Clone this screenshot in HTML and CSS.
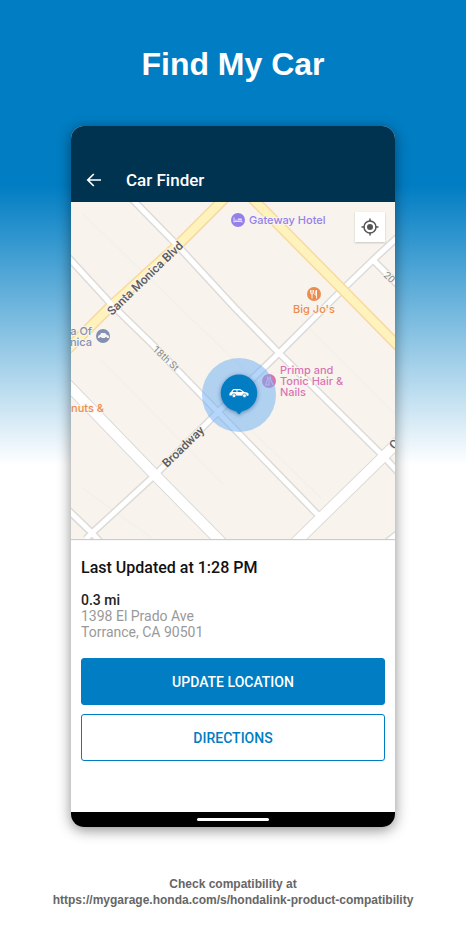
FILE: index.html
```html
<!DOCTYPE html>
<html lang="en">
<head>
    <meta charset="UTF-8">
    <meta name="viewport" content="width=device-width, initial-scale=1.0">
    <title>Find My Car</title>
    <link rel="stylesheet" href="styles.css">
</head>
<body>
    <h1>Find My Car</h1>

    <main class="phone">
        <header class="app-bar">
            <button class="back-btn" type="button" aria-label="Back">
                <svg width="16" height="16" viewBox="0 0 16 16" fill="none" stroke="currentColor" stroke-width="1.700">
                    <path d="M15 8H2M7.800 2L1.800 8l6 6"/>
                </svg>
            </button>
            <h2>Car Finder</h2>
        </header>

        <div class="map">
            <svg class="map-canvas" viewBox="0 0 324 337" role="img" aria-label="Map of the parked car">
                <rect width="324" height="337" fill="#f8f4ed"/>

                <!-- alleys -->
                <g class="alley">
                    <path d="M12 12L190 184M30 158L152 282M230 118L324 212M176 224L250 296M10 285L82 337"/>
                </g>

                <!-- road casings -->
                <g class="casing">
                    <path class="minor" d="M60 -4L106 43L164 106L208 151L312 254L330 273"/>
                    <path class="minor" d="M-4 54L41 103L82 143L147 210L249 315"/>
                    <path class="minor" d="M-4 307L21 331L30 341"/>
                    <path class="minor" d="M15 337L21 331L84 273L147 210L208 151L269 90L302 58L328 34"/>
                    <path class="minor" d="M302 58L330 86"/>
                    <path class="minor" d="M310 345L330 329"/>
                    <path class="major" d="M-5 181L84 273L152 342"/>
                    <path class="major" d="M222 343L311 256L330 237"/>
                </g>
                <!-- road surfaces -->
                <g class="surface">
                    <path class="minor" d="M60 -4L106 43L164 106L208 151L312 254L330 273"/>
                    <path class="minor" d="M-4 54L41 103L82 143L147 210L249 315"/>
                    <path class="minor" d="M-4 307L21 331L30 341"/>
                    <path class="minor" d="M15 337L21 331L84 273L147 210L208 151L269 90L302 58L328 34"/>
                    <path class="minor" d="M302 58L330 86"/>
                    <path class="minor" d="M310 345L330 329"/>
                    <path class="major" d="M-5 181L84 273L152 342"/>
                    <path class="major" d="M222 343L311 256L330 237"/>
                </g>
                <!-- boulevards -->
                <g class="blvd-casing">
                    <path d="M-5 149L41 103L107 43L156 -6"/>
                    <path d="M179 -6L272 88L330 147"/>
                </g>
                <g class="blvd">
                    <path d="M-5 149L41 103L107 43L156 -6"/>
                    <path d="M179 -6L272 88L330 147"/>
                </g>
                <path d="M36 98L46 108M101 38L111 48" stroke="#fff" stroke-width="5"/>

                <text class="street street-main" transform="translate(41 114) rotate(-44)">Santa Monica Blvd</text>
                <text class="street street-main" transform="translate(96 266) rotate(-44)">Broadway</text>
                <text class="street" transform="translate(81 148) rotate(43)">18th St</text>
                <text class="street" transform="translate(312 74) rotate(43)">20</text>
                <text class="street street-main" transform="translate(323 248) rotate(-44)">C</text>

                <!-- hotel -->
                <g class="poi hotel">
                    <circle cx="167" cy="18" r="7"/>
                    <path d="M163 15.500v5M163 19.500h8v1" fill="none" stroke="#e4dcf4"/>
                    <path d="M164 18.500h7v-.8q0-1.200-1.200-1.200H167v1.300h-3z" fill="#e4dcf4"/>
                    <text x="178" y="22">Gateway Hotel</text>
                </g>

                <!-- restaurant -->
                <g class="poi food">
                    <circle cx="243" cy="92" r="7"/>
                    <path d="M239.500 88v2.500q0 1.500 1.500 1.500t1.500-1.500V88M241 88v8.500M245.500 96.500V88q-1.500 1.500-1.500 5h1.500" fill="none" stroke="#f8f4ed"/>
                    <text x="243" y="111" text-anchor="middle">Big Jo's</text>
                    <text x="33" y="210" text-anchor="end">nuts &amp;</text>
                </g>

                <!-- dealer -->
                <g class="poi dealer">
                    <circle cx="32" cy="134" r="7"/>
                    <path d="M27 135q0-2 2-2l1-2h4l2 2q2 0 2 2v1H27z" fill="#f8f4ed"/>
                    <circle cx="29.500" cy="136" r="1"/>
                    <circle cx="35" cy="136" r="1"/>
                    <text x="21" y="133" text-anchor="end">a Of</text>
                    <text x="21" y="144" text-anchor="end">nica</text>
                </g>

                <!-- salon -->
                <g class="poi salon">
                    <circle cx="198" cy="179" r="7"/>
                    <path d="M196.500 174.500v3l-2 5.500h3.500v-8M199.500 174.500v3l2.500 5.500" fill="none" stroke="#f3c9e4"/>
                    <text x="209" y="172">Primp and</text>
                    <text x="209" y="183">Tonic Hair &amp;</text>
                    <text x="209" y="194">Nails</text>
                </g>

                <!-- accuracy area -->
                <circle cx="168" cy="193" r="37" fill="#6fb1f5" fill-opacity="0.52"/>

                <!-- car pin -->
                <g class="pin">
                    <path d="M168 172.500a18.500 18.500 0 0 1 3 36.700l-3 3.300l-3-3.300a18.500 18.500 0 0 1 3-36.700z" fill="#027dc3"/>
                    <path d="M158.500 193.500q-.6-2.800 1.500-3.500l1.500-2.300q.5-.7 1.500-.7h5q1.500 0 2.700.9l2.600 2q3.700.3 4.200 1.500.5 1.200-.3 2.300z" fill="#fff"/>
                    <path d="M161.500 190l1.200-1.800h2.800v1.800zM166.500 188.200h1.700q1 0 2 .8l1.200 1h-4.900z" fill="#027dc3"/>
                    <circle cx="163" cy="193.700" r="1.900" fill="#fff" stroke="#027dc3" stroke-width="0.700"/>
                    <circle cx="173.500" cy="193.700" r="1.900" fill="#fff" stroke="#027dc3" stroke-width="0.700"/>
                </g>
            </svg>

            <button class="locate-btn" type="button" aria-label="My location">
                <svg width="18" height="18" viewBox="0 0 18 18" fill="none" stroke="#555" stroke-width="1.500">
                    <circle cx="9" cy="9" r="6"/>
                    <circle cx="9" cy="9" r="3" fill="#555" stroke="none"/>
                    <path d="M9 .5v3M9 14.500v3M.5 9h3M14.500 9h3"/>
                </svg>
            </button>
        </div>

        <section class="details">
            <h3>Last Updated at 1:28 PM</h3>
            <p class="distance">0.3 mi</p>
            <address>1398 El Prado Ave<br>Torrance, CA 90501</address>
            <div class="actions">
                <button class="btn btn-primary" type="button">UPDATE LOCATION</button>
                <button class="btn" type="button">DIRECTIONS</button>
            </div>
        </section>

        <div class="nav-bar"><span class="nav-handle"></span></div>
    </main>

    <footer>
        Check compatibility at<br>
        <a href="https://mygarage.honda.com/s/hondalink-product-compatibility">https://mygarage.honda.com/s/hondalink-product-compatibility</a>
    </footer>
</body>
</html>
```
FILE: styles.css
```css
* {
    box-sizing: border-box;
}
body {
    margin: 0;
    min-height: 100vh;
    font-family: "Liberation Sans", Arial, sans-serif;
    background: #fff linear-gradient(#007dc3 0, #007dc3 185px, #fff 465px) no-repeat;
}
h1, h2, h3, p {
    margin: 0;
}
button {
    font-family: inherit;
    cursor: pointer;
}
h1 {
    padding: 45px 0 43px;
    font-size: 32px;
    line-height: 38px;
    color: #fff;
    text-align: center;
}
.phone {
    margin: 0 71px;
    font-family: Roboto, sans-serif;
    background: #fff;
    border-radius: 13px;
    overflow: hidden;
    box-shadow: 0 3px 14px rgba(0, 0, 0, 0.45);
}

/* App bar */
.app-bar {
    display: flex;
    align-items: center;
    gap: 24px;
    padding: 42px 15px 10px;
    background: #00334f;
    color: #fff;
}
.back-btn {
    display: flex;
    padding: 0;
    border: none;
    background: none;
    color: #fff;
}
.app-bar h2 {
    font-size: 17px;
    line-height: 24px;
    font-weight: 500;
}

/* Map */
.map {
    position: relative;
    box-shadow: 0 1px 1px rgba(0, 0, 0, 0.2);
}
.map-canvas {
    display: block;
    width: 100%;
}
.map-canvas path {
    stroke-linejoin: round;
}
.alley {
    fill: none;
    stroke: #f4f1eb;
    stroke-width: 2;
}
.casing, .surface, .blvd, .blvd-casing {
    fill: none;
}
.casing {
    stroke: #dddbd9;
}
.casing .minor {
    stroke-width: 8;
}
.casing .major {
    stroke-width: 12;
}
.surface {
    stroke: #fff;
}
.surface .minor {
    stroke-width: 5;
}
.surface .major {
    stroke-width: 10;
}
.blvd-casing {
    stroke: #f8d9a0;
    stroke-width: 11;
}
.blvd {
    stroke: #fff3bd;
    stroke-width: 8;
}
.street {
    font-size: 10px;
    fill: #8a8a8a;
    stroke: #f8f4ed;
    stroke-width: 2px;
    paint-order: stroke;
}
.street-main {
    font-size: 12px;
    font-weight: 500;
    fill: #5b5b5e;
}
.poi {
    font-family: Inter, sans-serif;
    font-size: 11px;
    font-weight: 500;
}
.poi text {
    stroke: #f8f4ed;
    stroke-width: 2px;
    paint-order: stroke;
}
.hotel {
    fill: #9480ea;
}
.food {
    fill: #ec8c4e;
}
.dealer {
    fill: #8490b3;
}
.salon {
    fill: #d974b4;
}
.pin {
    filter: drop-shadow(0 1px 2px rgba(0, 50, 100, 0.5));
}
.locate-btn {
    position: absolute;
    top: 10px;
    right: 10px;
    display: flex;
    align-items: center;
    justify-content: center;
    width: 30px;
    height: 30px;
    padding: 0;
    border: none;
    background: #fff;
    box-shadow: 0 1px 2px rgba(0, 0, 0, 0.2);
}

/* Location details */
.details {
    padding: 19px 10px 51px;
    font-size: 14px;
    line-height: 16px;
}
.details h3 {
    margin-bottom: 14px;
    font-size: 16px;
    line-height: 20px;
    font-weight: 500;
    color: #111;
}
.distance {
    font-weight: 500;
    color: #222;
}
address {
    font-style: normal;
    color: #999;
}
.actions {
    display: grid;
    gap: 9px;
    margin-top: 18px;
}
.btn {
    height: 47px;
    border: 1px solid #007dc3;
    border-radius: 3px;
    background: #fff;
    color: #007dc3;
    font-size: 14px;
    font-weight: 500;
}
.btn-primary {
    background: #007dc3;
    color: #fff;
}

/* Gesture bar */
.nav-bar {
    display: flex;
    align-items: center;
    justify-content: center;
    height: 15px;
    background: #000;
}
.nav-handle {
    width: 72px;
    height: 3px;
    border-radius: 2px;
    background: #fff;
}

footer {
    padding: 49px 0 23px;
    font-size: 12px;
    line-height: 16px;
    font-weight: bold;
    color: #666;
    text-align: center;
}
footer a {
    color: inherit;
    text-decoration: none;
}
```
